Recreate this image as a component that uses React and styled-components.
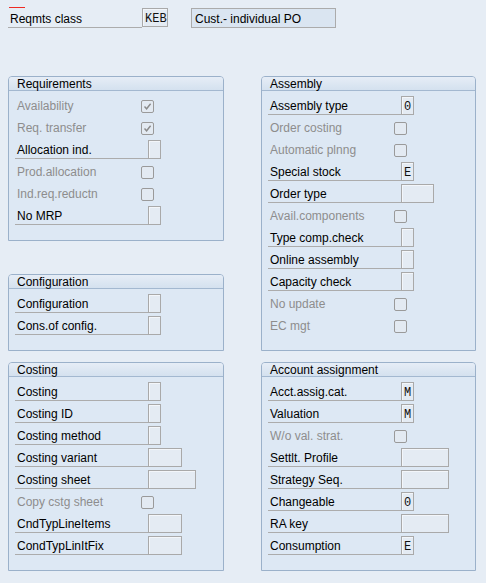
import React from 'react';
import styled, { createGlobalStyle } from 'styled-components';

const GlobalStyle = createGlobalStyle`
  html, body {
    margin: 0;
    padding: 0;
    background: #e6edf5;
  }
  body {
    font-family: "Liberation Sans", Arial, sans-serif;
    font-size: 12px;
    color: #000;
  }
`;

const requirements = [
  { label: 'Availability', check: true, checked: true },
  { label: 'Req. transfer', check: true, checked: true },
  { label: 'Allocation ind.', width: 13 },
  { label: 'Prod.allocation', check: true },
  { label: 'Ind.req.reductn', check: true },
  { label: 'No MRP', width: 13 },
];

const configuration = [
  { label: 'Configuration', width: 13 },
  { label: 'Cons.of config.', width: 13 },
];

const costing = [
  { label: 'Costing', width: 13 },
  { label: 'Costing ID', width: 13 },
  { label: 'Costing method', width: 13 },
  { label: 'Costing variant', width: 34 },
  { label: 'Costing sheet', width: 48 },
  { label: 'Copy cstg sheet', check: true },
  { label: 'CndTypLineItems', width: 34 },
  { label: 'CondTypLinItFix', width: 34 },
];

const assembly = [
  { label: 'Assembly type', width: 13, value: '0' },
  { label: 'Order costing', check: true },
  { label: 'Automatic plnng', check: true },
  { label: 'Special stock', width: 13, value: 'E' },
  { label: 'Order type', width: 33 },
  { label: 'Avail.components', check: true },
  { label: 'Type comp.check', width: 13 },
  { label: 'Online assembly', width: 13 },
  { label: 'Capacity check', width: 13 },
  { label: 'No update', check: true },
  { label: 'EC mgt', check: true },
];

const accountAssignment = [
  { label: 'Acct.assig.cat.', width: 13, value: 'M' },
  { label: 'Valuation', width: 13, value: 'M' },
  { label: 'W/o val. strat.', check: true },
  { label: 'Settlt. Profile', width: 48 },
  { label: 'Strategy Seq.', width: 48 },
  { label: 'Changeable', width: 13, value: '0' },
  { label: 'RA key', width: 48 },
  { label: 'Consumption', width: 13, value: 'E' },
];

function CheckMark() {
  return (
    <svg width="11" height="11" viewBox="0 0 11 11">
      <path d="M2.5 5.5 L4.6 7.8 L8.6 2.8" fill="none" stroke="#8a8a8a" strokeWidth="1.4" />
    </svg>
  );
}

function FormRow({ row }) {
  if (row.check) {
    return (
      <Row>
        <GrayLabel>{row.label}</GrayLabel>
        <CheckBox>{row.checked && <CheckMark />}</CheckBox>
      </Row>
    );
  }
  return (
    <Row>
      <Label>{row.label}</Label>
      <Field $width={row.width}>{row.value}</Field>
    </Row>
  );
}

function Group({ title, rows, width }) {
  return (
    <Box $width={width}>
      <Header>{title}</Header>
      <Body>
        {rows.map((row) => (
          <FormRow key={row.label} row={row} />
        ))}
      </Body>
    </Box>
  );
}

export default function App() {
  return (
    <Page>
      <GlobalStyle />
      <TopRow>
        <TopLabel>Reqmts class</TopLabel>
        <Field $width={26}>KEB</Field>
        <Description>Cust.- individual PO</Description>
      </TopRow>
      <Columns>
        <Column>
          <Group title="Requirements" rows={requirements} width={216} />
          <EmptyRow />
          <Group title="Configuration" rows={configuration} width={216} />
          <Group title="Costing" rows={costing} width={216} />
        </Column>
        <Column>
          <Group title="Assembly" rows={assembly} width={215} />
          <Group title="Account assignment" rows={accountAssignment} width={215} />
        </Column>
      </Columns>
    </Page>
  );
}

const Page = styled.div`
  width: 486px;
  height: 583px;
  overflow: hidden;
  box-sizing: border-box;
  padding: 7px 0 0 8px;
  background: #e6edf5;
`;

const TopRow = styled.div`
  display: flex;
  align-items: flex-start;
  height: 22px;
`;

const TopLabel = styled.div`
  position: relative;
  width: 134px;
  height: 21px;
  box-sizing: border-box;
  padding: 5px 0 0 2px;
  border-bottom: 1px solid #acacac;
  line-height: 15px;

  &::before {
    content: '';
    position: absolute;
    left: 1px;
    top: 0;
    width: 16px;
    height: 1px;
    background: #ee2b24;
  }
`;

const Description = styled.div`
  width: 145px;
  height: 20px;
  margin: 1px 0 0 23px;
  box-sizing: border-box;
  padding: 3px 0 0 3px;
  border: 1px solid #ababab;
  background: #dae5f1;
  line-height: 15px;
`;

const Columns = styled.div`
  display: flex;
  gap: 37px;
  margin-top: 44px;
`;

const Column = styled.div`
  display: flex;
  flex-direction: column;
`;

const EmptyRow = styled.div`
  height: 22px;
`;

const Box = styled.div`
  width: ${(p) => p.$width}px;
  margin: 3px 0 8px;
  box-sizing: border-box;
  border: 1px solid #9bb1ca;
  border-radius: 4px 4px 0 0;
  background: #dde8f4;
`;

const Header = styled.div`
  height: 13px;
  padding-left: 8px;
  border-bottom: 1px solid #a3b8d0;
  border-radius: 3px 3px 0 0;
  background: linear-gradient(#e6edf6, #d4e1ef);
  line-height: 14px;
  color: #000;
`;

const Body = styled.div`
  padding: 4px 0 13px 6px;
`;

const Row = styled.div`
  display: flex;
  align-items: flex-start;
  height: 22px;
`;

const Label = styled.div`
  width: 133px;
  height: 20px;
  box-sizing: border-box;
  padding: 4px 0 0 2px;
  border-bottom: 1px solid #acacac;
  line-height: 15px;
  white-space: nowrap;
`;

const GrayLabel = styled.div`
  width: 126px;
  height: 20px;
  box-sizing: border-box;
  padding: 4px 0 0 2px;
  line-height: 15px;
  color: #8d8d8d;
  white-space: nowrap;
`;

const Field = styled.div`
  width: ${(p) => p.$width}px;
  height: 19px;
  margin-top: 1px;
  box-sizing: border-box;
  padding: 3px 0 0 2px;
  border: 1px solid #a9a9a9;
  background: #e4ebf3;
  box-shadow: inset 1px 1px 0 #f3f6fa;
  font-family: "Liberation Mono", "Courier New", monospace;
  font-size: 12px;
  line-height: 14px;
  color: #111;
`;

const CheckBox = styled.div`
  width: 13px;
  height: 13px;
  margin-top: 5px;
  box-sizing: border-box;
  display: flex;
  align-items: center;
  justify-content: center;
  border: 1px solid #9a9a9a;
  border-radius: 2px;
  background: #e3eaf2;
`;
